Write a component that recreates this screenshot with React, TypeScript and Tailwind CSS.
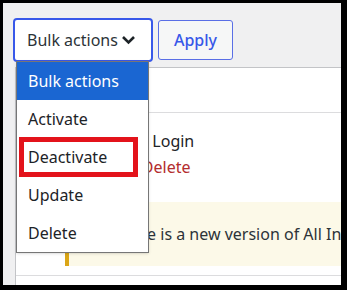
import React from 'react';

const font = { fontFamily: '"Noto Sans", "Open Sans", sans-serif' };

const options = ['Bulk actions', 'Activate', 'Deactivate', 'Update', 'Delete'];

const App: React.FC = () => {
  return (
    <div className="w-[347px] h-[290px] bg-black pt-[3px] pl-[3px] pr-[6px] pb-[5px]" style={font}>
      <div className="relative w-full h-full bg-[#f0f0f1] overflow-hidden text-[16px] text-[#2c3338]">
        {/* Toolbar */}
        <div className="h-[64px] pt-[15px] pl-[10px] flex items-start gap-[5px]">
          <div className="w-[140px] h-[44px] border-2 border-[#3858e9] rounded-[4px] bg-white flex items-center pl-[12px] pr-[15px] justify-between">
            <span className="leading-none">Bulk actions</span>
            <svg width="15" height="10" viewBox="0 0 15 10" fill="none">
              <polyline points="2,2 7.5,7.5 13,2" stroke="#1d2327" strokeWidth="2.6" />
            </svg>
          </div>
          <button className="mt-[2px] w-[75px] h-[40px] border border-[#5a6fe6] rounded-[3px] bg-[#f6f7f7] text-[#3858e9] font-medium leading-none">
            Apply
          </button>
        </div>

        {/* Plugins table */}
        <div className="ml-[12px] -mr-[10px] h-[240px] bg-white border-l border-t border-[#c3c4c7]">
          <div className="h-[45px] border-b border-[#dcdcde]" />
          <div className="pt-[15px] pl-[49px] leading-[26px]">
            <div className="text-[#1d2327]">
              Temporary<span className="inline-block w-[6px]" />Login
            </div>
            <div className="text-[#b32d2e]">
              <span className="text-[#2271b1]">Activate</span>
              <span className="text-[#a7aaad]"> | </span>
              Delete
            </div>
          </div>
          <div className="mt-[22px] ml-[49px] h-[64px] bg-[#fcf9e8] border-l-4 border-[#dba617] flex items-center pl-[44px] whitespace-nowrap text-[#2c3338]">
            There is a new version of All In One SEO available.
          </div>
          <div className="h-[10px] border-b border-[#dcdcde]" />
        </div>

        {/* Open select list */}
        <div className="absolute left-[13px] top-[58px] w-[133px] bg-white border border-[#767676] shadow-sm">
          {options.map((o, i) => (
            <div
              key={o}
              className={`h-[38px] flex items-center pl-[11px] ${i === 0 ? 'bg-[#1a66d2] text-white' : 'text-[#1d2327]'}`}
            >
              {o}
            </div>
          ))}
        </div>

        {/* Highlight box */}
        <div className="absolute left-[16px] top-[134px] w-[119px] h-[40px] border-[5px] border-[#e3131b]" />
      </div>
    </div>
  );
};

export default App;
